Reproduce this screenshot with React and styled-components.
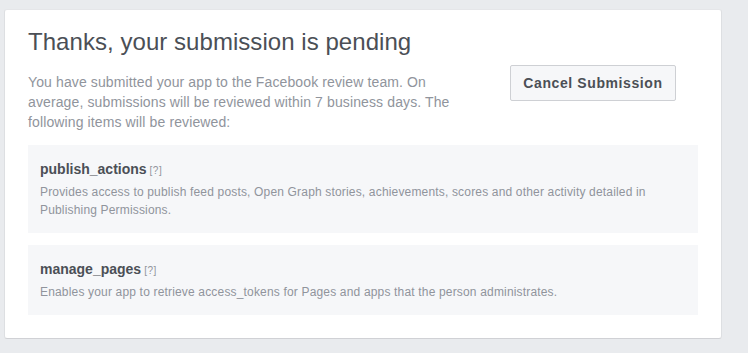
import React from "react";
import styled, { createGlobalStyle } from "styled-components";

const Global = createGlobalStyle`
  html, body { margin: 0; padding: 0; background: #e9ebee; }
  body { font-family: "Liberation Sans", Arial, sans-serif; }
`;

const Page = styled.div`
  padding: 9px 26px 14px 4px;
  width: 748px;
  box-sizing: border-box;
`;

const Card = styled.div`
  background: #fff;
  border: 1px solid;
  border-color: #e5e6e9 #dddfe2 #d0d1d5;
  border-radius: 3px;
  padding: 18px 23px 23px 23px;
  box-sizing: border-box;
  width: 718px;
`;

const Title = styled.h2`
  margin: 0;
  font-size: 24px;
  line-height: 28px;
  font-weight: normal;
  color: #4b4f56;
  letter-spacing: 0.05px;
`;

const Intro = styled.div`
  display: flex;
  align-items: flex-start;
  justify-content: space-between;
  margin-top: 16px;
`;

const Lead = styled.p`
  margin: 0;
  width: 436px;
  font-size: 14px;
  line-height: 20px;
  color: #90949c;
  letter-spacing: 0.12px;
`;

const Button = styled.button`
  margin: -7px 22px 0 0;
  height: 36px;
  width: 166px;
  box-sizing: border-box;
  background: #f6f7f9;
  border: 1px solid #ced0d4;
  border-radius: 2px;
  font-family: inherit;
  font-size: 14px;
  font-weight: bold;
  color: #4b4f56;
  letter-spacing: 0.6px;
  padding: 0 8px;
`;

const List = styled.div`
  display: flex;
  flex-direction: column;
  gap: 12px;
  margin-top: 13px;
`;

const Item = styled.div`
  background: #f6f7f9;
  padding: 15px 12px 14px 12px;
`;

const ItemTitle = styled.div`
  font-size: 14px;
  line-height: 18px;
  font-weight: bold;
  color: #4b4f56;
`;

const Help = styled.span`
  font-size: 10px;
  line-height: 10px;
  font-weight: normal;
  color: #90949c;
  margin-left: 3px;
  letter-spacing: 0.5px;
`;

const Desc = styled.div`
  margin-top: 5px;
  font-size: 12px;
  line-height: 18px;
  color: #90949c;
  letter-spacing: 0.17px;
`;

const items = [
  {
    name: "publish_actions",
    desc: "Provides access to publish feed posts, Open Graph stories, achievements, scores and other activity detailed in Publishing Permissions.",
  },
  {
    name: "manage_pages",
    desc: "Enables your app to retrieve access_tokens for Pages and apps that the person administrates.",
  },
];

export default function App() {
  return (
    <Page>
      <Global />
      <Card>
        <Title>Thanks, your submission is pending</Title>
        <Intro>
          <Lead>
            You have submitted your app to the Facebook review team. On average,
            submissions will be reviewed within 7 business days. The following
            items will be reviewed:
          </Lead>
          <Button>Cancel Submission</Button>
        </Intro>
        <List>
          {items.map((it) => (
            <Item key={it.name}>
              <ItemTitle>
                {it.name}
                <Help>[?]</Help>
              </ItemTitle>
              <Desc>{it.desc}</Desc>
            </Item>
          ))}
        </List>
      </Card>
    </Page>
  );
}
